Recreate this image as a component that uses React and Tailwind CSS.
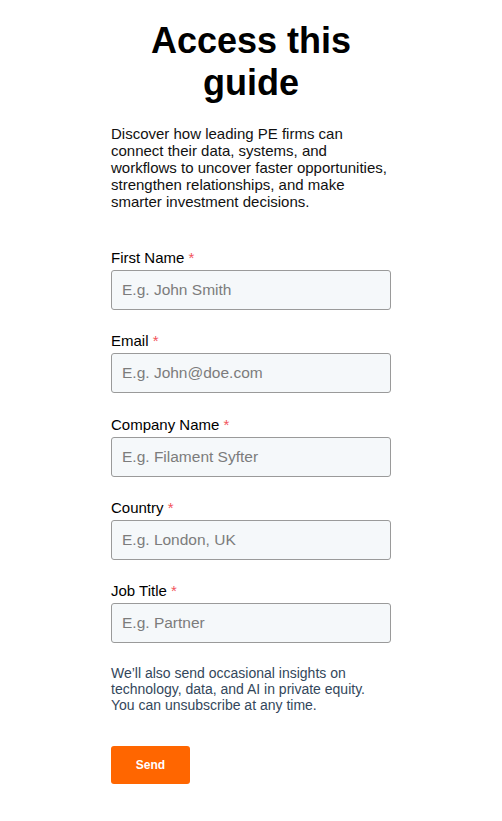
import React from "react";

const fields = [
  { label: "First Name", placeholder: "E.g. John Smith" },
  { label: "Email", placeholder: "E.g. John@doe.com" },
  { label: "Company Name", placeholder: "E.g. Filament Syfter" },
  { label: "Country", placeholder: "E.g. London, UK" },
  { label: "Job Title", placeholder: "E.g. Partner" },
];

const App = () => {
  return (
    <div className="bg-white min-h-[821px] font-['Liberation_Sans',Arial,sans-serif] text-black">
      <div className="w-[280px] mx-auto pt-[20px]">
        <h1 className="text-[36px] leading-[42px] font-bold text-center px-6">
          Access this guide
        </h1>
        <p className="mt-[21px] text-[15px] leading-[17px] text-[#111]">
          Discover how leading PE firms can connect their data, systems, and
          workflows to uncover faster opportunities, strengthen relationships,
          and make smarter investment decisions.
        </p>

        <form className="mt-[39px]" onSubmit={(e) => e.preventDefault()}>
          <div className="flex flex-col gap-[22.25px]">
            {fields.map((f) => (
              <div key={f.label}>
                <label className="block text-[15px] leading-[17px] mb-[4px]">
                  {f.label} <span className="text-[#f2545b]">*</span>
                </label>
                <input
                  type="text"
                  placeholder={f.placeholder}
                  className="block w-[280px] h-[40px] px-[10px] text-[15.5px] bg-[#f5f8fa] border border-[#9a9a9a] rounded-[3px] placeholder:text-[#7c7c7c] outline-none"
                />
              </div>
            ))}
          </div>

          <p className="mt-[22px] text-[14px] leading-[16px] text-[#33475b]">
            We’ll also send occasional insights on technology, data, and AI in
            private equity. You can unsubscribe at any time.
          </p>

          <button
            type="submit"
            className="mt-[33px] w-[79px] h-[38px] bg-[#ff6600] text-white text-[12px] font-bold rounded-[3px]"
          >
            Send
          </button>
        </form>
      </div>
    </div>
  );
};

export default App;
